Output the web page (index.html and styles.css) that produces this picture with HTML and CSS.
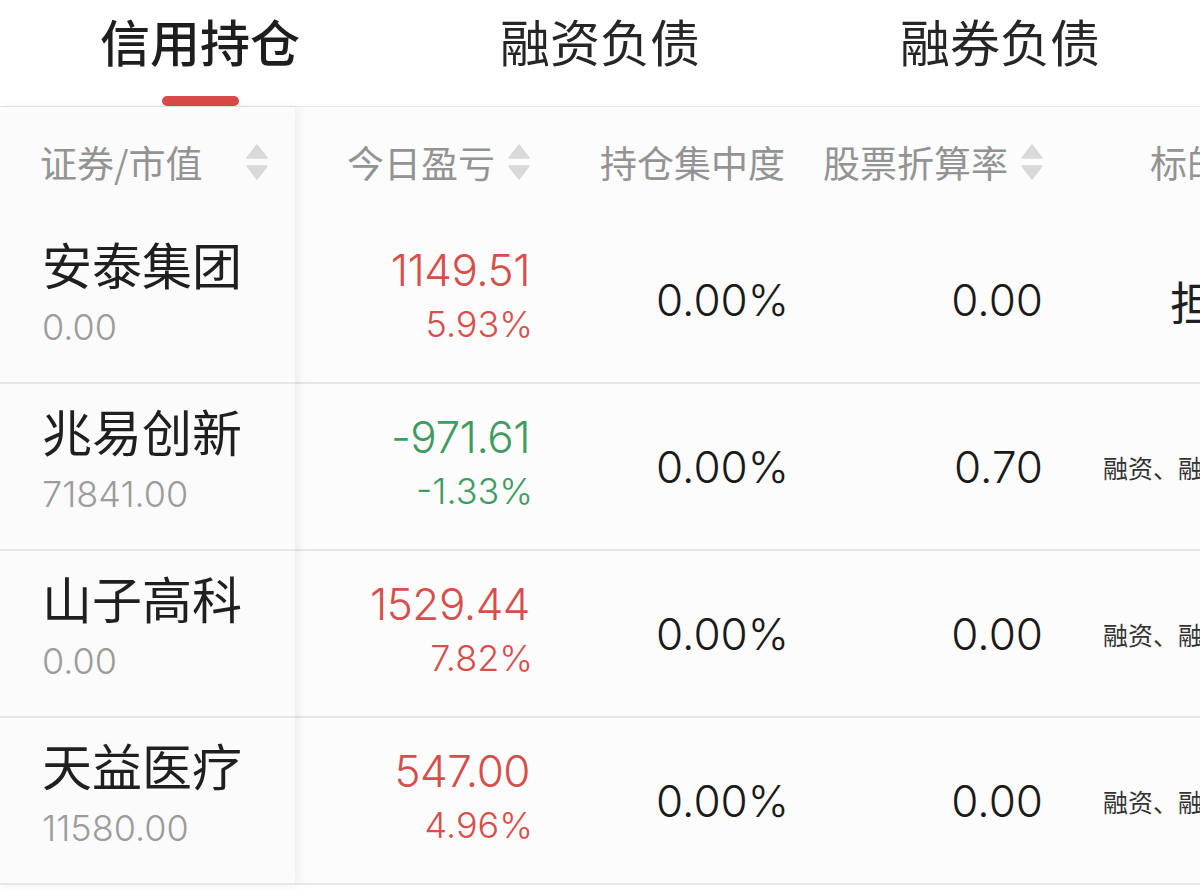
FILE: index.html
```html
<!DOCTYPE html>
<html lang="zh-CN">
<head>
<meta charset="utf-8">
<title>信用持仓</title>
<link rel="stylesheet" href="styles.css">
</head>
<body>
<div class="page">
  <nav class="tabs">
    <div class="tab active"><span class="tab-text">信用持仓</span><span class="ink"></span></div>
    <div class="tab"><span class="tab-text">融资负债</span></div>
    <div class="tab"><span class="tab-text">融券负债</span></div>
  </nav>

  <div class="table">
    <div class="fixed">
      <div class="hrow name-head">
        <span class="htext">证券/市值</span>
        <svg class="sort" viewBox="0 0 22 36"><path d="M11 1 L21 14 H1 Z"/><path d="M1 22 H21 L11 35 Z"/></svg>
      </div>
      <div class="brow name-cell"><div class="name">安泰集团</div><div class="sub">0.00</div></div>
      <div class="brow name-cell"><div class="name">兆易创新</div><div class="sub">71841.00</div></div>
      <div class="brow name-cell"><div class="name">山子高科</div><div class="sub">0.00</div></div>
      <div class="brow name-cell"><div class="name">天益医疗</div><div class="sub">11580.00</div></div>
    </div>

    <div class="scroll">
      <div class="hrow grid">
        <div class="cell c2 hcell"><span class="htext">今日盈亏</span><svg class="sort" viewBox="0 0 22 36"><path d="M11 1 L21 14 H1 Z"/><path d="M1 22 H21 L11 35 Z"/></svg></div>
        <div class="cell c3 hcell"><span class="htext">持仓集中度</span></div>
        <div class="cell c4 hcell"><span class="htext">股票折算率</span><svg class="sort" viewBox="0 0 22 36"><path d="M11 1 L21 14 H1 Z"/><path d="M1 22 H21 L11 35 Z"/></svg></div>
        <div class="cell c5 hcell head5"><span class="htext">标的类型</span></div>
      </div>

      <div class="brow grid">
        <div class="cell c2 pl up"><div class="pl-main">1149.51</div><div class="pl-sub">5.93%</div></div>
        <div class="cell c3 num">0.00%</div>
        <div class="cell c4 num">0.00</div>
        <div class="cell c5 big5">担保品</div>
      </div>
      <div class="brow grid">
        <div class="cell c2 pl down"><div class="pl-main">-971.61</div><div class="pl-sub">-1.33%</div></div>
        <div class="cell c3 num">0.00%</div>
        <div class="cell c4 num">0.70</div>
        <div class="cell c5 small5">融资、融券标的</div>
      </div>
      <div class="brow grid">
        <div class="cell c2 pl up"><div class="pl-main">1529.44</div><div class="pl-sub">7.82%</div></div>
        <div class="cell c3 num">0.00%</div>
        <div class="cell c4 num">0.00</div>
        <div class="cell c5 small5">融资、融券标的</div>
      </div>
      <div class="brow grid">
        <div class="cell c2 pl up"><div class="pl-main">547.00</div><div class="pl-sub">4.96%</div></div>
        <div class="cell c3 num">0.00%</div>
        <div class="cell c4 num">0.00</div>
        <div class="cell c5 small5">融资、融券标的</div>
      </div>
    </div>
  </div>
</div>
</body>
</html>
```

FILE: styles.css
```css
* { box-sizing: border-box; }

html, body {
  margin: 0;
  padding: 0;
  background: #ffffff;
}

body {
  font-family: "Inter", "Noto Sans CJK SC", "Noto Sans", sans-serif;
  color: #222222;
}

.page {
  width: 1200px;
  height: 890px;
  overflow: hidden;
  background: #ffffff;
}

/* ---------- tabs ---------- */
.tabs {
  display: grid;
  grid-template-columns: 400px 400px 400px;
  height: 107px;
  border-bottom: 1px solid #e6e6e6;
  background: #ffffff;
}

.tab {
  display: flex;
  flex-direction: column;
  align-items: center;
  padding-top: 11px;
  height: 106px;
}

.tab-text {
  font-family: "Noto Sans CJK SC", sans-serif;
  font-size: 50px;
  line-height: 58px;
  color: #262626;
  font-weight: 400;
}

.tab.active .tab-text {
  font-weight: 500;
  color: #1e1e1e;
}

.ink {
  margin-top: auto;
  width: 77px;
  height: 10px;
  border-radius: 5px;
  background: #d84b49;
}

/* ---------- table ---------- */
.table {
  display: flex;
  background: #fcfcfc;
}

.fixed {
  width: 295px;
  flex: none;
  position: relative;
  z-index: 1;
  background: #fbfbfb;
  box-shadow: 3px 0 10px rgba(0, 0, 0, 0.07);
}

.scroll {
  flex: 1;
  min-width: 0;
  overflow: hidden;
  background: #fcfcfc;
}

.hrow {
  height: 110px;
  align-items: center;
}

.brow {
  height: 167px;
  border-bottom: 2px solid #e7e7e7;
  align-items: center;
}

.grid {
  display: grid;
  grid-template-columns: 236px 259px 255px 300px;
  width: 1050px;
}

.htext {
  font-family: "Noto Sans CJK SC", sans-serif;
  font-size: 37px;
  line-height: 44px;
  color: #939393;
  white-space: nowrap;
}

.sort {
  width: 22px;
  height: 36px;
  flex: none;
  fill: #d9d9d9;
  stroke: #d9d9d9;
  stroke-width: 1.5;
  stroke-linejoin: round;
}

.name-head {
  display: flex;
  justify-content: space-between;
  padding: 0 27px 0 40px;
}

.name-cell {
  display: flex;
  flex-direction: column;
  justify-content: center;
  align-items: flex-start;
  padding-left: 42px;
  padding-bottom: 12px;
}

.name {
  font-family: "Noto Sans CJK SC", sans-serif;
  font-size: 50px;
  line-height: 60px;
  margin-bottom: 6px;
  color: #1f1f1f;
}

.sub {
  font-size: 36px;
  font-weight: 300;
  line-height: 56px;
  color: #9c9c9c;
}

/* cells */
.cell {
  height: 100%;
  display: flex;
  align-items: center;
  justify-content: flex-end;
  white-space: nowrap;
}

.hcell {
  gap: 13px;
}

.c2 { padding-right: 1px; }
.c3 { padding-right: 1px; }
.c4 { padding-right: 2px; }

.c3.hcell { padding-right: 5px; }

.c5 {
  justify-content: flex-start;
}

.head5 { padding-left: 105px; }

.pl {
  flex-direction: column;
  align-items: flex-end;
  justify-content: center;
  font-weight: 300;
  padding-bottom: 5px;
}

.pl-main {
  font-size: 44px;
  line-height: 54px;
  letter-spacing: -0.5px;
}

.pl-sub {
  font-size: 36px;
  line-height: 54px;
  margin-right: -3px;
}

.up { color: #d64f4c; }
.down { color: #3f9b5f; }

.num {
  font-size: 44px;
  font-weight: 300;
  color: #1a1a1a;
}

.big5 {
  font-family: "Noto Sans CJK SC", sans-serif;
  font-size: 46px;
  color: #1f1f1f;
  padding-left: 125px;
}

.small5 {
  font-family: "Noto Sans CJK SC", sans-serif;
  font-size: 25px;
  color: #333333;
  padding-left: 58px;
}
```
